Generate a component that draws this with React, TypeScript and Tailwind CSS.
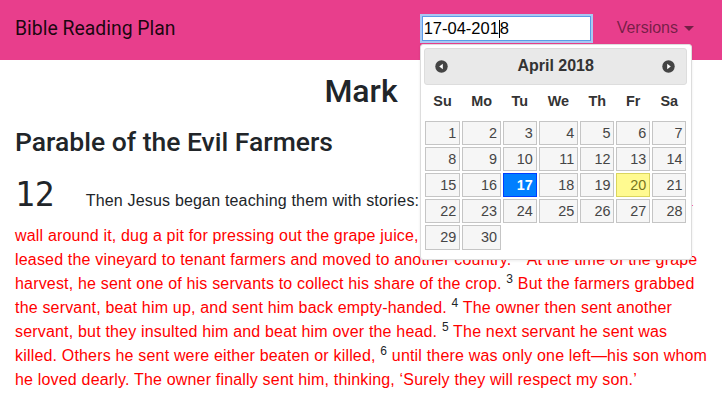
const weeks: (number | null)[][] = [
  [1, 2, 3, 4, 5, 6, 7],
  [8, 9, 10, 11, 12, 13, 14],
  [15, 16, 17, 18, 19, 20, 21],
  [22, 23, 24, 25, 26, 27, 28],
  [29, 30, null, null, null, null, null],
];

const days = ["Su", "Mo", "Tu", "We", "Th", "Fr", "Sa"];

const CircleArrow = ({ dir }: { dir: "left" | "right" }) => (
  <svg width="13" height="13" viewBox="0 0 13 13">
    <circle cx="6.5" cy="6.5" r="6.2" fill="#444" />
    {dir === "left" ? (
      <path d="M4.2 6.5 L7.8 3.8 L7.8 9.2 Z" fill="#fff" />
    ) : (
      <path d="M8.8 6.5 L5.2 3.8 L5.2 9.2 Z" fill="#fff" />
    )}
  </svg>
);

const DayCell = ({ day }: { day: number | null }) => {
  if (day === null) return <td className="p-[1px]" />;
  let cls = "border-[#c5c5c5] bg-[#f6f6f6] text-[#454545]";
  if (day === 17) cls = "border-[#003eff] bg-[#007fff] text-white font-bold";
  if (day === 20) cls = "border-[#dad55e] bg-[#fffa90] text-[#777620]";
  return (
    <td className="p-[1px]">
      <a className={`block border p-[0.2em] text-right ${cls}`}>{day}</a>
    </td>
  );
};

const DatePicker = () => {
  return (
    <div className="absolute left-[-2px] top-[28px] z-10 w-[272px] rounded-[3px] border border-[#ddd] bg-white px-[3.2px] pt-[3.2px] font-['Liberation_Sans',Arial,sans-serif] text-[16px] text-[#333] shadow-[0_1px_3px_rgba(0,0,0,0.08)]">
      <div className="relative rounded-[3px] border border-[#ddd] bg-[#e9e9e9] py-[3.2px] font-bold text-[#333]">
        <span className="absolute left-[10px] top-[11px] flex">
          <CircleArrow dir="left" />
        </span>
        <span className="absolute right-[11px] top-[11px] flex">
          <CircleArrow dir="right" />
        </span>
        <div className="mx-[2.3em] text-center leading-[1.8em]">April 2018</div>
      </div>
      <table className="mb-[0.6em] w-full border-collapse text-[0.9em] leading-[16.4px]">
        <thead>
          <tr>
            {days.map((d) => (
              <th key={d} className="px-[0.3em] pb-[0.7em] pt-[0.55em] text-center font-bold">
                {d}
              </th>
            ))}
          </tr>
        </thead>
        <tbody>
          {weeks.map((w, i) => (
            <tr key={i}>
              {w.map((d, j) => (
                <DayCell key={j} day={d} />
              ))}
            </tr>
          ))}
        </tbody>
      </table>
    </div>
  );
};

const Navbar = () => {
  return (
    <nav className="flex h-[60px] items-center justify-between bg-[#e83e8c] px-[15px]">
      <span className="-mt-[2px] font-[Roboto,sans-serif] text-[19.4px] text-black/90">Bible Reading Plan</span>
      <div className="-mt-[3px] flex items-center font-['Liberation_Sans',Arial,sans-serif] text-[16px]">
        <div className="relative">
          <div className="flex h-[25px] w-[169px] items-center border border-[#5b9be8] bg-white pl-[1px] text-[16.5px] text-black shadow-[0_0_0_2px_#a9c9f2]">
            17-04-201
            <span className="inline-block h-[18px] w-px bg-black" />8
          </div>
          <DatePicker />
        </div>
        <span className="-mt-[1px] ml-[26px] mr-[13px] flex items-center text-black/50">
          Versions
          <span className="ml-[6px] inline-block border-x-[5px] border-t-[5px] border-x-transparent border-t-black/50" />
        </span>
      </div>
    </nav>
  );
};

const Red = ({ children }: { children: React.ReactNode }) => <span className="text-[#ff0000]">{children}</span>;

const App = () => {
  return (
    <div className="min-h-[409px] bg-white text-[#212529]">
      <Navbar />
      <main className="px-[15px]">
        <h2 className="mt-[12px] text-center font-[Roboto,sans-serif] text-[32px] font-medium leading-[1.2]">Mark</h2>
        <h3 className="mt-[16px] mb-[8px] font-[Roboto,sans-serif] text-[26.5px] font-medium leading-[1.2]">
          Parable of the Evil Farmers
        </h3>
        <p className="whitespace-nowrap font-['Liberation_Sans',Arial,sans-serif] text-[16px] leading-[24px] tracking-[0.18px]">
          <span className="mr-[31px] font-['DejaVu_Sans_Mono',monospace] text-[33px] leading-[58px] tracking-normal">
            12
          </span>
          Then Jesus began teaching them with stories: <Red>“A man planted a vineyard. He built a</Red>
          <br />
          <Red>wall around it, dug a pit for pressing out the grape juice, and built a lookout tower. Then he</Red>
          <br />
          <Red>leased the vineyard to tenant farmers and moved to another country.</Red> <sup>2</sup>{" "}
          <Red>At the time of the grape</Red>
          <br />
          <Red>harvest, he sent one of his servants to collect his share of the crop.</Red> <sup>3</sup>{" "}
          <Red>But the farmers grabbed</Red>
          <br />
          <Red>the servant, beat him up, and sent him back empty-handed.</Red> <sup>4</sup>{" "}
          <Red>The owner then sent another</Red>
          <br />
          <Red>servant, but they insulted him and beat him over the head.</Red> <sup>5</sup>{" "}
          <Red>The next servant he sent was</Red>
          <br />
          <Red>killed. Others he sent were either beaten or killed,</Red> <sup>6</sup>{" "}
          <Red>until there was only one left—his son whom</Red>
          <br />
          <Red>he loved dearly. The owner finally sent him, thinking, ‘Surely they will respect my son.’</Red>
        </p>
      </main>
    </div>
  );
};

export default App;
